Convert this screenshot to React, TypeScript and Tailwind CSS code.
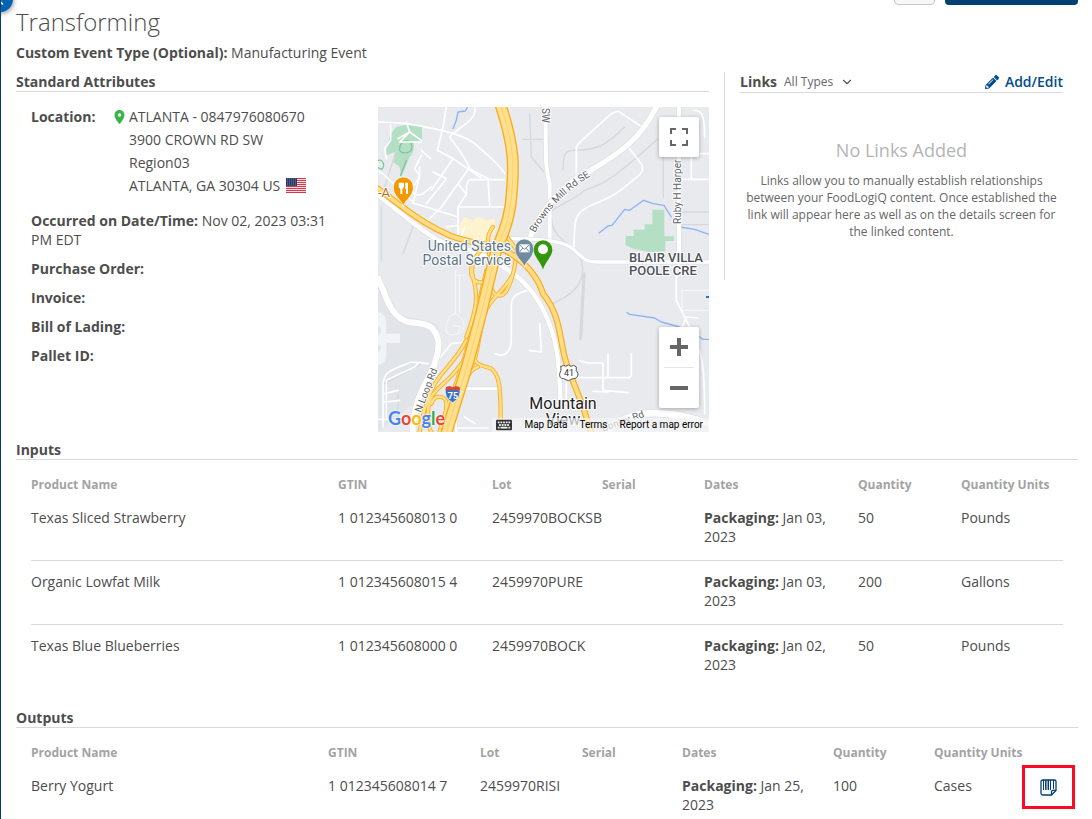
import { useState } from 'react';
import type { ReactNode } from 'react';
import { ChevronDown, ChevronLeft } from 'lucide-react';
import { FaPencilAlt, FaKeyboard } from 'react-icons/fa';

type Product = {
  name: string;
  gtin: string;
  lot: string;
  packaging: string;
  quantity: string;
  units: string;
};

const INPUTS: Product[] = [
  { name: 'Texas Sliced Strawberry', gtin: '1 012345608013 0', lot: '2459970BOCKSB', packaging: 'Jan 03, 2023', quantity: '50', units: 'Pounds' },
  { name: 'Organic Lowfat Milk', gtin: '1 012345608015 4', lot: '2459970PURE', packaging: 'Jan 03, 2023', quantity: '200', units: 'Gallons' },
  { name: 'Texas Blue Blueberries', gtin: '1 012345608000 0', lot: '2459970BOCK', packaging: 'Jan 02, 2023', quantity: '50', units: 'Pounds' },
];

const OUTPUTS: Product[] = [
  { name: 'Berry Yogurt', gtin: '1 012345608014 7', lot: '2459970RISI', packaging: 'Jan 25, 2023', quantity: '100', units: 'Cases' },
];

const HEADERS = ['Product Name', 'GTIN', 'Lot', 'Serial', 'Dates', 'Quantity', 'Quantity Units'];

// Roads are drawn on a 993 x 975 canvas
const FAINT_ROADS = [
  'M455 20 L460 150 L498 195 M435 97 H500',
  'M55 130 L20 240 M10 300 V460 M110 345 L75 440',
  'M555 190 C555 140 560 130 590 130 C660 130 690 110 740 60 M520 310 C560 290 590 275 620 250 C680 230 700 220 840 95 M520 310 C515 370 540 390 590 430 C620 460 620 500 600 535 C580 565 550 575 525 590',
  'M856 130 V270 M910 315 H993 M910 353 H993',
  'M60 860 V940 M20 830 L130 770',
];

const PATHS = [
  'M245 505 V620 M232 505 H260 M232 490 V620',
  'M215 630 C190 680 210 690 240 680 C270 670 260 630 230 620 Z M225 655 L250 660 L240 675',
  'M910 550 H993 M912 550 V610 H993',
];

const SMALL_ROADS = [
  'M0 45 C60 45 100 50 180 68 C240 80 270 95 290 110 C310 130 360 165 380 200',
  'M205 0 L195 60 L178 130 L225 155 L160 250 M225 155 L310 213',
  'M290 0 C300 40 240 60 215 90 C230 110 270 165 275 185 L330 215 L335 295',
  'M275 180 L240 230 L265 262 M378 218 H275 C265 225 265 240 265 262 L240 300 H378',
  'M240 230 L190 300 L140 350 M165 195 L205 215 L145 290 M0 190 L20 205 L110 290 L145 300 L240 330 V400',
  'M130 145 L110 185 L125 205 L105 290 M240 300 V345 M205 360 L240 355',
  'M38 55 V100 L20 125 L25 155 M85 45 L95 75 L60 95 M130 105 H65 L95 75 L130 100',
  'M130 130 L158 155 M125 180 C125 205 125 215 108 235 C90 255 115 270 135 260 L160 240',
  'M595 205 V120 C600 105 620 95 700 20 L720 12 L790 58',
  'M750 120 L790 170 C800 190 790 200 770 215 C720 260 700 270 640 295 C590 320 588 330 588 430',
  'M940 110 V215 M900 217 H993 M940 140 H993 M948 10 C970 10 980 20 980 90',
  'M895 483 V580 L935 660 C970 730 980 760 980 920',
  'M605 760 C620 770 640 768 675 768 V850 L750 857 M690 740 V810 M600 812 H750 Q760 812 760 800 V740',
  'M645 853 L690 855 M565 890 V830',
  'M450 550 C410 560 400 570 400 600 V700 Q398 740 370 745 L350 740 M485 650 L490 735 L455 730',
  'M15 960 V830 C20 790 40 790 100 765 L150 770 M25 930 V820 L110 780 L125 765 M20 860 L60 850 M20 885 L65 880',
  'M0 937 H40 M235 963 H330 M270 845 H360 M170 770 L220 710 L265 705',
  'M895 700 L925 630 L960 633 M260 360 L245 400 M260 930 L290 950',
];

const WIDE_ROADS = [
  { d: 'M502 -5 C505 160 500 170 515 230 V400', w: 12 },
  { d: 'M835 0 C790 90 740 130 630 195 C560 230 480 310 450 410', w: 16 },
  { d: 'M903 0 V470', w: 12 },
  { d: 'M400 395 C480 395 560 400 590 430 C620 460 630 465 660 465 H993', w: 10 },
  { d: 'M0 265 L60 312 C100 345 130 370 180 400 C260 430 330 440 375 480 C450 520 500 590 530 700 C545 760 545 830 548 890', w: 13 },
  { d: 'M0 515 C25 560 30 625 90 645 C140 650 175 650 182 710 C180 780 140 820 120 880 C110 920 100 950 105 975', w: 18 },
  { d: 'M235 975 C220 860 250 840 280 845 H360', w: 9 },
  { d: 'M690 975 C740 910 850 900 993 950', w: 20 },
];

const RAMPS = [
  'M345 360 C325 385 325 410 340 470 M280 483 C275 520 300 530 315 525 M330 410 C290 440 275 480 285 510 C300 560 300 600 265 690',
  'M380 380 C395 400 410 420 430 450 M415 440 C410 500 390 560 370 565 C350 570 340 550 335 530',
  'M400 510 C380 550 330 580 320 620 C300 690 300 740 285 770',
  'M285 740 C290 780 320 775 340 785 C365 805 368 840 368 940',
  'M300 780 C260 790 250 870 240 900',
  'M265 700 C230 770 180 800 160 850 C140 900 130 930 125 975',
  'M250 770 C210 830 170 840 155 880 C145 920 150 960 160 975',
  'M160 890 C170 860 205 865 205 890 L200 975',
  'M325 490 C300 600 280 690 250 780 C230 850 200 910 185 975',
];

const INTERSTATE = 'M368 -5 C410 120 410 180 398 290 C385 390 355 400 342 483 C318 590 300 660 275 750 C250 840 230 890 205 980';

const US_ROUTE = 'M0 245 L60 290 C130 345 180 370 215 385 C260 405 330 410 380 430 C440 460 480 510 495 560 C545 620 545 690 560 750 C575 810 610 870 640 980';

function LocationMap() {
  return (
    <div className="relative overflow-hidden bg-[#e8eaed] font-['Roboto',sans-serif]">
      <svg viewBox="0 0 331 325" className="block w-full" role="img" aria-label="Map of Atlanta, GA">
        <g transform="scale(0.33333)" fill="none" strokeLinecap="round" strokeLinejoin="round">
          <rect width="993" height="975" fill="#e8eaed" />
          <path d="M0 500 L60 620 L180 650 L190 720 L120 880 L0 975 Z" fill="#e1e4e8" />
          <path d="M0 615 Q25 620 25 650 V680 H66 V708 H25 V745 Q25 770 0 775 V735 Q10 730 8 715 H0 V680 H8 Q12 665 0 655 Z" fill="#f1f3f4" />
          <path d="M38 80 L55 60 L90 52 L132 60 V105 H108 L106 135 L95 150 L70 210 L65 180 L45 165 L50 135 L25 145 L25 125 Z" fill="#b5dfc5" />
          <path d="M65 125 C65 100 100 90 102 120 C100 145 60 140 65 125 M0 160 C20 155 20 185 10 187 L0 182 M85 160 L68 205" stroke="#81c79c" strokeWidth="4" />
          <path d="M242 360 L258 330 L285 340 L300 328 L325 340 L350 335 L355 365 L335 400 L310 430 L250 400 Z" fill="#fef3cf" />
          <path d="M823 308 H859 V388 H888 V402 H862 V433 L812 435 L765 425 L743 415 V387 H767 V368 H800 V352 H823 Z" fill="#b5dfc5" />
          <path d="M268 0 L262 12 L240 15 L235 40 L225 65 M663 378 L690 357 L702 355 L740 307 L755 310 L797 280 L825 290 L858 295 L880 330 M905 360 L950 367 L993 382 M747 617 L755 622 L830 633 L850 645 L905 660 M965 690 L975 697 H993" stroke="#8ab4f8" strokeWidth="4" />
          {FAINT_ROADS.map((d) => (
            <path key={d} d={d} stroke="#d5d8dc" strokeWidth="4" />
          ))}
          {PATHS.map((d) => (
            <path key={d} d={d} stroke="#f6f7f8" strokeWidth="3" />
          ))}
          <path d="M618 500 L608 695" stroke="#d5d8dc" strokeWidth="9" />
          {SMALL_ROADS.map((d) => (
            <path key={d} d={d} stroke="#fff" strokeWidth="5" />
          ))}
          {WIDE_ROADS.map((r) => (
            <g key={r.d}>
              <path d={r.d} stroke="#d9dce0" strokeWidth={r.w + 3} />
              <path d={r.d} stroke="#fff" strokeWidth={r.w} />
            </g>
          ))}
          {RAMPS.map((d) => (
            <path key={d} d={d} stroke="#fab42b" strokeWidth="13" />
          ))}
          {RAMPS.map((d) => (
            <path key={d} d={d} stroke="#ffe08f" strokeWidth="7" />
          ))}
          <path d={US_ROUTE} stroke="#f9ab1c" strokeWidth="19" />
          <path d={US_ROUTE} stroke="#ffdc85" strokeWidth="12" />
          <path d={INTERSTATE} stroke="#f9ab1c" strokeWidth="36" />
          <path d={INTERSTATE} stroke="#ffe08f" strokeWidth="28" />
          <path d={INTERSTATE} stroke="#fdcf68" strokeWidth="3" />

          {/* Interstate 75 shield */}
          <path d="M203 842 L215 838 L224 842 L233 838 L245 842 Q252 872 224 887 Q196 872 203 842 Z" fill="#3b73c4" stroke="#fff" strokeWidth="2" />
          <path d="M204 840 L215 837 L224 841 L233 837 L245 840 L246 850 H202 Z" fill="#d9483b" />
          {/* US 41 shield */}
          <path d="M549 779 L556 775 L563 778 L571 774 L579 778 L587 775 L595 780 Q592 790 600 800 Q600 815 585 815 L571 821 L557 815 Q543 815 545 800 Q551 790 549 779 Z" fill="#fff" stroke="#555" strokeWidth="3" />

          {/* Restaurant pin */}
          <path d="M76 298 C70 276 46 270 46 240 A30 30 0 0 1 106 240 C106 270 82 276 76 298 Z" fill="#f29900" stroke="#fff" strokeWidth="2" />
          <path d="M62 227 H78 V238 Q78 244 73 245 V261 H67 V245 Q62 244 62 238 Z M82 227 H90 V261 H84 V246 H82 Z" fill="#fff" />
          {/* Post office pin */}
          <path d="M439 480 C434 460 411 454 411 424 A28 28 0 0 1 467 424 C467 454 444 460 439 480 Z" fill="#728c9f" stroke="#fff" strokeWidth="2" />
          <rect x="424" y="412" width="31" height="24" fill="#fff" />
          <path d="M424 413 L439 427 L455 413 M424 436 L434 424 M455 436 L445 424" stroke="#728c9f" strokeWidth="3" />
          {/* Event location */}
          <path d="M495 488 C488 463 467 449 467 428 A28 28 0 0 1 523 428 C523 449 502 463 495 488 Z" fill="#34960a" />
          <circle cx="495" cy="427" r="15" fill="#fff" />
        </g>

        <g stroke="#fff" strokeWidth="2" strokeLinejoin="round" paintOrder="stroke" fontFamily="Roboto, sans-serif">
          <text x="133" y="144" textAnchor="end" fontSize="14" fill="#5b7386">United States</text>
          <text x="133" y="158" textAnchor="end" fontSize="14" fill="#5b7386">Postal Service</text>
          <text x="0" y="90" fontSize="13" fill="#c26a12">-A</text>
          <text x="251" y="155" fontSize="13" fontWeight="500" fill="#4d5156">BLAIR VILLA</text>
          <text x="251" y="168" fontSize="13" fontWeight="500" fill="#4d5156">POOLE CRE</text>
          <text x="185" y="302" textAnchor="middle" fontSize="16" fill="#202124">Mountain</text>
          <text x="185" y="318" textAnchor="middle" fontSize="16" fill="#202124">View</text>
          <text transform="translate(303 117) rotate(-90)" fontSize="10" fill="#5f6368">Ruby H Harper</text>
          <text transform="translate(164 1) rotate(90)" fontSize="10" fill="#5f6368">SW</text>
          <text transform="translate(43 306) rotate(-69)" fontSize="10" fill="#5f6368">N Loop Rd</text>
          <text transform="translate(225 325) rotate(-20)" fontSize="10" fill="#5f6368">Conley Rd</text>
          <path id="browns-mill" d="M157 126 C170 102 190 82 216 67" fill="none" stroke="none" />
          <text fontSize="10" fill="#5f6368">
            <textPath href="#browns-mill">Browns Mill Rd SE</textPath>
          </text>
        </g>
        <g fontFamily="Roboto, sans-serif" textAnchor="middle">
          <text x="75" y="292" fontSize="9" fontWeight="700" fill="#fff">75</text>
          <text x="191" y="269" fontSize="9" fill="#333">41</text>
        </g>
        <path d="M328 190 H331" stroke="#1a73e8" strokeWidth="2" />
      </svg>

      <button
        type="button"
        aria-label="Toggle fullscreen view"
        className="absolute top-[10px] right-[10px] flex size-10 items-center justify-center rounded-[2px] bg-white shadow-[0_1px_4px_rgba(0,0,0,0.3)]"
      >
        <svg viewBox="0 0 18 18" className="size-[18px]" fill="#666">
          <path d="M0 0v6h2V2h4V0H0zm16 0h-4v2h4v4h2V0h-2zm0 16h-4v2h6v-6h-2v4zM2 12H0v6h6v-2H2v-4z" />
        </svg>
      </button>

      <div className="absolute right-[10px] bottom-6 flex w-10 flex-col items-center rounded-[2px] bg-white shadow-[0_1px_4px_rgba(0,0,0,0.3)]">
        <button type="button" aria-label="Zoom in" className="flex size-10 items-center justify-center">
          <svg viewBox="0 0 18 18" className="size-[18px]" fill="#666">
            <path d="M18 7h-7V0H7v7H0v4h7v7h4v-7h7z" />
          </svg>
        </button>
        <div className="h-px w-[30px] bg-[#e6e6e6]" />
        <button type="button" aria-label="Zoom out" className="flex size-10 items-center justify-center">
          <svg viewBox="0 0 18 18" className="size-[18px]" fill="#666">
            <path d="M0 7h18v4H0z" />
          </svg>
        </button>
      </div>

      {/* Google wordmark */}
      <a
        href="#google"
        className="absolute bottom-[2px] left-[10px] font-['Lato',sans-serif] text-lg leading-6 font-bold [text-shadow:0_0_2px_#fff,0_0_2px_#fff]"
      >
        <span className="text-[#4285f4]">G</span>
        <span className="text-[#ea4335]">o</span>
        <span className="text-[#fbbc05]">o</span>
        <span className="text-[#4285f4]">g</span>
        <span className="text-[#34a853]">l</span>
        <span className="text-[#ea4335]">e</span>
      </a>

      <div className="absolute right-0 bottom-0 flex h-[14px] items-center gap-3 bg-[#f5f5f5]/70 pr-[6px] pl-1 text-[10px] leading-[14px] text-black">
        <button type="button" aria-label="Keyboard shortcuts">
          <FaKeyboard className="size-4 text-[#333]" />
        </button>
        <button type="button">Map Data</button>
        <a href="#terms">Terms</a>
        <a href="#report">Report a map error</a>
      </div>
    </div>
  );
}

function UsFlag() {
  return (
    <svg viewBox="0 0 20 15" className="h-[15px] w-5" role="img" aria-label="United States">
      <rect width="20" height="15" fill="#f3dfe2" />
      {[0, 2, 4, 6, 8, 10, 12, 14].map((y) => (
        <rect key={y} y={y} width="20" height="1" fill="#cf3a4c" />
      ))}
      <rect width="11" height="8" fill="#2b3a66" />
      {[1, 3, 5, 7].map((y) => (
        <path key={y} d={`M1 ${y}h1m1 0h1m1 0h1m1 0h1m1 0h1`} stroke="#8d98b8" strokeWidth="0.7" />
      ))}
    </svg>
  );
}

function BarcodeNoteIcon() {
  return (
    <svg viewBox="0 0 17 17" className="size-[17px]" fill="none" stroke="#003f72">
      <path d="M3 1H14.5Q16 1 16 2.5V11.5L11.5 16H3Q1 16 1 14V3Q1 1 3 1Z" strokeWidth="1.3" />
      <path d="M16 11.3H12.8Q11.5 11.3 11.5 12.6V16" strokeWidth="1.3" />
      <path d="M3.5 1V11M10.5 1V11M13.5 1V10" strokeWidth="1" />
      <path d="M5.8 1V11M8.3 1V11" strokeWidth="1.5" />
    </svg>
  );
}

function SectionTitle({ children }: { children: ReactNode }) {
  return <h2 className="border-b border-[#d9d9d9] text-sm leading-[19px] font-bold">{children}</h2>;
}

function ProductTable({ rows, label, withAction }: { rows: Product[]; label: string; withAction?: boolean }) {
  return (
    <div className="px-[15px] pt-[10px]">
      <table aria-label={label} className="w-full table-fixed text-left text-sm leading-[19px]">
        {withAction ? (
          <colgroup>
            <col className="w-[297px]" />
            <col className="w-[152px]" />
            <col className="w-[102px]" />
            <col className="w-[100px]" />
            <col className="w-[151px]" />
            <col className="w-[101px]" />
            <col className="w-[101px]" />
            <col className="w-[28px]" />
          </colgroup>
        ) : (
          <colgroup>
            <col className="w-[307px]" />
            <col className="w-[154px]" />
            <col className="w-[110px]" />
            <col className="w-[102px]" />
            <col className="w-[154px]" />
            <col className="w-[103px]" />
            <col className="w-[102px]" />
          </colgroup>
        )}
        <thead>
          <tr className="text-xs leading-[17px] text-[#a3a3a3]">
            {HEADERS.map((h) => (
              <th key={h} scope="col" className="pt-[6px] pb-1 font-bold whitespace-nowrap">
                {h}
              </th>
            ))}
            {withAction && <td />}
          </tr>
        </thead>
        <tbody>
          {rows.map((row) => (
            <tr key={row.gtin} className="border-b border-[#d9d9d9] align-top last:border-b-0">
              <td className="pt-[11px]">{row.name}</td>
              <td className="pt-[11px]">{row.gtin}</td>
              <td className="pt-[11px] whitespace-nowrap">{row.lot}</td>
              <td />
              <td className="pt-[11px] pr-6 pb-[14px]">
                <b>Packaging:</b> {row.packaging}
              </td>
              <td className="pt-[11px]">{row.quantity}</td>
              <td className="pt-[11px]">{row.units}</td>
              {withAction && (
                <td className="relative">
                  <button
                    type="button"
                    aria-label="Print label"
                    className="absolute top-0 -right-3 flex h-11 w-[53px] items-center justify-center border-3 border-[#fb0a26]"
                  >
                    <BarcodeNoteIcon />
                  </button>
                </td>
              )}
            </tr>
          ))}
        </tbody>
      </table>
    </div>
  );
}

function LinksPanel() {
  const [type, setType] = useState('all');

  return (
    <aside className="self-start border-l border-[#d9d9d9] px-[15px] pb-10">
      <div className="flex items-center border-b border-[#d9d9d9] text-sm leading-5">
        <h2 className="font-bold">Links</h2>
        <div className="relative ml-[7px] flex items-center">
          <select
            aria-label="Link type"
            value={type}
            onChange={(e) => setType(e.target.value)}
            className="appearance-none bg-transparent pr-5 text-xs leading-5 text-[#666]"
          >
            <option value="all">All Types</option>
          </select>
          <ChevronDown className="pointer-events-none absolute right-0 size-[14px] text-[#555]" />
        </div>
        <a href="#links" className="ml-auto flex items-center gap-[6px] font-semibold text-[#004b8d]">
          <FaPencilAlt className="size-[14px]" />
          Add/Edit
        </a>
      </div>
      <div className="pt-[45px] text-center">
        <h3 className="text-lg leading-6 text-[#b5b5b5]">No Links Added</h3>
        <p className="mt-[10px] px-1 text-xs leading-[17px] text-[#666]">
          Links allow you to manually establish relationships between your FoodLogiQ content. Once established the link
          will appear here as well as on the details screen for the linked content.
        </p>
      </div>
    </aside>
  );
}

export default function App() {
  return (
    <div className="relative h-screen overflow-hidden border-l border-[#003f72] bg-white pr-[14px] pl-[15px] font-['Open_Sans',sans-serif] text-sm leading-[19px] text-[#4d4d4d]">
      <button
        type="button"
        aria-label="Collapse panel"
        className="absolute -top-[14px] -left-[14px] flex size-[26px] items-center justify-center rounded-full bg-[#0063b3] text-white shadow-[1px_2px_4px_rgba(0,0,0,0.35)]"
      >
        <ChevronLeft className="size-5" />
      </button>

      {/* Action bar */}
      <div className="flex h-[5px] items-end justify-end gap-[10px] overflow-hidden">
        <button type="button" aria-label="More" className="h-8 w-[41px] shrink-0 rounded border border-[#c8c8c8] bg-[#f7f7f7]" />
        <button type="button" aria-label="Edit event" className="h-8 w-[133px] shrink-0 rounded bg-[#003f72]" />
      </div>

      <h1 className="mt-px text-2xl leading-8 font-light">Transforming</h1>
      <p className="mt-[5px]">
        <b>Custom Event Type (Optional):</b> Manufacturing Event
      </p>

      <div className="mt-[10px] grid grid-cols-3">
        <section className="col-span-2 pr-[15px]">
          <SectionTitle>Standard Attributes</SectionTitle>
          <div className="mt-[15px] grid grid-cols-[minmax(0,1fr)_331px]">
            <div className="px-[15px]">
              <div className="flex">
                <b className="w-[83px]">Location:</b>
                <svg viewBox="0 0 10 14" className="mt-[3px] mr-1 h-[14px] w-[11px]" fill="#35b545">
                  <path fillRule="evenodd" d="M5 0a5 5 0 0 0-5 5c0 4 5 9 5 9s5-5 5-9a5 5 0 0 0-5-5zm0 3.2a1.8 1.8 0 1 1 0 3.6 1.8 1.8 0 0 1 0-3.6z" />
                </svg>
                <address className="-mt-[2px] leading-[23px] not-italic">
                  <div>ATLANTA - 0847976080670</div>
                  <div>3900 CROWN RD SW</div>
                  <div>Region03</div>
                  <div className="flex items-center gap-[6px]">
                    ATLANTA, GA 30304 US
                    <UsFlag />
                  </div>
                </address>
              </div>
              <div className="mt-[14px] flex flex-col gap-[10px]">
                <p className="pr-4">
                  <b>Occurred on Date/Time:</b> Nov 02, 2023 03:31 PM EDT
                </p>
                <b>Purchase Order:</b>
                <b>Invoice:</b>
                <b>Bill of Lading:</b>
                <b>Pallet ID:</b>
              </div>
            </div>
            <LocationMap />
          </div>
        </section>
        <LinksPanel />
      </div>

      <section className="mt-2">
        <SectionTitle>Inputs</SectionTitle>
        <ProductTable rows={INPUTS} label="Inputs" />
      </section>

      <section className="mt-5">
        <SectionTitle>Outputs</SectionTitle>
        <ProductTable rows={OUTPUTS} label="Outputs" withAction />
      </section>
    </div>
  );
}
